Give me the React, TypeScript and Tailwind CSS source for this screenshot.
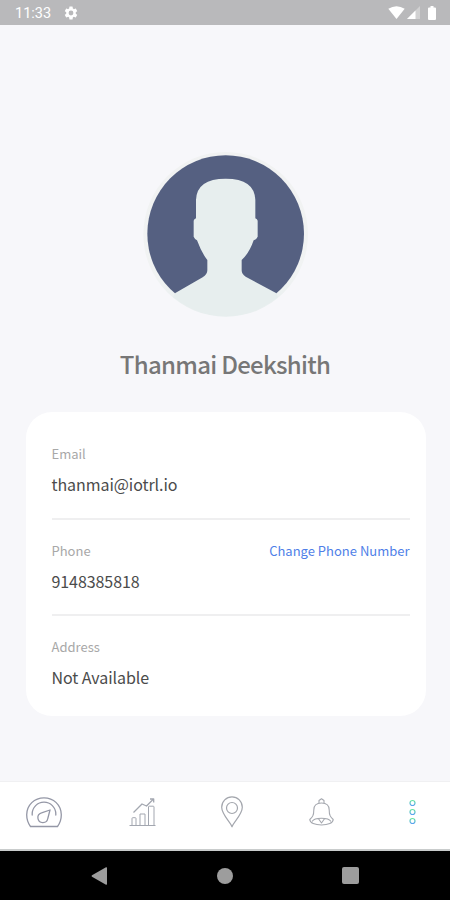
import React from "react";

const fields = [
  { label: "Email", value: "thanmai@iotrl.io" },
  { label: "Phone", value: "9148385818", action: "Change Phone Number" },
  { label: "Address", value: "Not Available" },
];

function StatusBar() {
  return (
    <header className="flex h-[25px] items-center bg-[#b9b9bb] pl-[15px] pr-[14px] text-white">
      <span className="pt-[3px] font-[Roboto,sans-serif] text-[14.5px] leading-none font-normal">
        11:33
      </span>
      <svg className="ml-3 size-4" viewBox="0 0 24 24" fill="currentColor">
        <path d="M19.14 12.94c.04-.3.06-.61.06-.94s-.02-.64-.07-.94l2.03-1.58a.5.5 0 0 0 .12-.61l-1.92-3.32a.49.49 0 0 0-.59-.22l-2.39.96a7 7 0 0 0-1.62-.94l-.36-2.54a.48.48 0 0 0-.48-.41h-3.84a.47.47 0 0 0-.47.41l-.36 2.54c-.59.24-1.13.57-1.62.94l-2.39-.96a.48.48 0 0 0-.59.22L2.74 8.87a.48.48 0 0 0 .12.61l2.03 1.58a6 6 0 0 0-.02 1.88l-2.03 1.58a.5.5 0 0 0-.12.61l1.92 3.32c.12.22.37.29.59.22l2.39-.96c.5.38 1.03.7 1.62.94l.36 2.54c.05.24.24.41.48.41h3.84c.24 0 .44-.17.47-.41l.36-2.54a6.8 6.8 0 0 0 1.62-.94l2.39.96c.22.08.47 0 .59-.22l1.92-3.32a.47.47 0 0 0-.12-.61zM12 15.6a3.6 3.6 0 1 1 0-7.2 3.6 3.6 0 0 1 0 7.2z" />
      </svg>
      <svg className="ml-auto h-[13px] w-[17px]" viewBox="0 0 17 13" fill="currentColor">
        <path d="M.3 2.8Q8.500-2.500 16.700 2.800L8.500 13z" />
      </svg>
      <svg className="ml-[2px] h-[13px] w-[13px]" viewBox="0 0 13 13" fill="currentColor">
        <path d="M0 13 13 0v13z" opacity=".35" />
        <path d="M0 13 8.500 4.500V13z" />
      </svg>
      <svg className="ml-[8px] h-[14px] w-[8px]" viewBox="0 0 8 14" fill="currentColor">
        <path d="M2.500 0h3v1.500H7a1 1 0 0 1 1 1V13a1 1 0 0 1-1 1H1a1 1 0 0 1-1-1V2.500a1 1 0 0 1 1-1h1.500z" />
      </svg>
    </header>
  );
}

function Avatar() {
  return (
    <svg className="size-[190px]" viewBox="0 0 570 570">
      <defs>
        <linearGradient id="ring" x1="0" y1="0" x2="0" y2="1">
          <stop offset="0" stopColor="#f1f2f2" />
          <stop offset=".75" stopColor="#f1f3f3" />
          <stop offset="1" stopColor="#e7eeee" />
        </linearGradient>
        <clipPath id="face">
          <circle cx="287" cy="281" r="247" />
        </clipPath>
      </defs>
      <circle cx="287" cy="283" r="247" fill="url(#ring)" />
      <circle cx="287" cy="281" r="235" fill="#556081" />
      <path
        clipPath="url(#face)"
        d="M136 459 218 412Q232 403 232 391V360Q215 339 201 301Q195 299 191 290V242Q192 237 198 235V180Q200 116 287 116Q374 116 376 180V235Q382 237 383 242V290Q379 299 371 301Q358 339 335 360V391Q335 403 347 410L438 459 480 540H90z"
        fill="#e7eeee"
      />
    </svg>
  );
}

function GaugeIcon() {
  return (
    <svg className="h-8 w-9" viewBox="0 0 36 32" fill="none" stroke="#9497a6" strokeWidth="1.3" strokeLinejoin="round" strokeLinecap="round">
      <path d="M4.500 30.500H31.500Q35.300 25.500 35.300 18.800C35.300 9 27.500 1.800 18 1.800S.7 9 .7 18.800Q.7 25.500 4.500 30.500z" />
      <path d="M6.200 19V18A11.800 11.800 0 0 1 29.800 18V19" />
      <path d="M24 14 15.500 16.800A5 5 0 1 0 21.800 22.500z" />
    </svg>
  );
}

function ChartIcon() {
  return (
    <svg className="ml-[67px] h-[29px] w-[27px]" viewBox="0 0 27 29" fill="none" stroke="#a3a7b0" strokeWidth="1" strokeLinejoin="round">
      <path d="M.5 27.500H26.500M3 27.500V20.500Q3 19.700 3.800 19.700H6.200Q7 19.700 7 20.500V27.500M11 27.500V16H16V27.500M19.500 27.500V9Q19.500 8.200 20.300 8.200H24.200Q25 8.200 25 9V27.500" />
      <path d="M4.500 14.500 13 6 17.500 8 24 1.500M21 1H24.700V4.500" strokeWidth="1.300" />
    </svg>
  );
}

function PinIcon() {
  return (
    <svg className="ml-[65px] h-8 w-[22px]" viewBox="0 0 22 32" fill="none" stroke="#a3a6ad" strokeWidth="1.2" strokeLinejoin="round">
      <path d="M11 30.800C9.500 26 .7 18.500.7 11.200A10.300 10.300 0 0 1 21.300 11.200C21.300 18.500 12.500 26 11 30.800z" />
      <circle cx="11" cy="12" r="5.500" />
    </svg>
  );
}

function BellIcon() {
  return (
    <svg className="ml-[66px] h-[28px] w-[25px]" viewBox="0 0 25 28" fill="none" stroke="#a5a8af" strokeWidth="1.1" strokeLinejoin="round">
      <path d="M10 5V2.500L12.500.7 15 2.500V5" />
      <path d="M.8 21.500C3.500 19 4.800 17.500 4.800 12C4.800 7.500 8 5 12.500 5S20.200 7.500 20.200 12C20.200 17.500 21.500 19 24.200 21.500C24.200 25 19 27 12.500 27S.8 25 .8 21.500z" />
      <path d="M3 23.500Q5 20.300 12.500 20.300T22 23.500M9.500 20.800 12.500 25 15.500 20.800" />
    </svg>
  );
}

function MoreIcon() {
  return (
    <svg className="ml-[75px] h-[26px] w-[7px]" viewBox="0 0 7 26" fill="none" strokeWidth="1.2">
      <defs>
        <linearGradient id="dot" x1="0" y1="0" x2="0" y2="1">
          <stop offset="0" stopColor="#65e3a2" />
          <stop offset="1" stopColor="#5ba4ef" />
        </linearGradient>
      </defs>
      {[4, 13, 22].map((cy) => (
        <circle key={cy} cx="3.5" cy={cy} r="2.500" stroke="url(#dot)" />
      ))}
    </svg>
  );
}

export default function App() {
  return (
    <div className="flex h-[900px] w-[450px] flex-col overflow-hidden bg-[#f7f7fa] font-['Noto_Sans_CJK_SC',sans-serif]">
      <StatusBar />

      <main className="flex flex-1 flex-col items-center pt-[115px]">
        <Avatar />
        <h1 className="mt-[14px] h-10 text-[24px] leading-10 font-medium tracking-[-0.72px] whitespace-nowrap text-[#777777]">
          Thanmai Deekshith
        </h1>
        <section className="mt-[28px] ml-[1px] h-[304px] w-[400px] rounded-[26px] bg-white pt-[11px] pr-4 pl-[26px]">
          {fields.map((field) => (
            <div
              key={field.label}
              className="h-24 border-b-2 border-[#efeff0] pt-[21px] first:h-[97px] last:border-b-0"
            >
              <div className="flex h-5 items-center justify-between text-[13px] whitespace-nowrap">
                <span className="text-[#a8a8a8]">{field.label}</span>
                {field.action && (
                  <button className="text-[#4f7fe8]">{field.action}</button>
                )}
              </div>
              <p className="mt-2 text-[16px] leading-6 tracking-[-0.07px] whitespace-nowrap text-[#4b4b4b]">
                {field.value}
              </p>
            </div>
          ))}
        </section>
      </main>

      <nav className="flex h-[70px] items-center border-t border-b-2 border-[#f0f0f2] border-b-[#c9cccc] bg-white pb-[7px] pl-[26px]">
        <GaugeIcon />
        <ChartIcon />
        <PinIcon />
        <BellIcon />
        <MoreIcon />
      </nav>

      <footer className="flex h-[49px] items-center justify-between bg-black px-[91px] text-[#9d9d9d]">
        <svg className="h-[18px] w-4" viewBox="0 0 16 18" fill="currentColor">
          <path d="M1 8.300 15 .3Q16 0 16 1V17Q16 18 15 17.700L1 9.700Q0 9 1 8.300z" />
        </svg>
        <div className="size-4 rounded-full bg-current" />
        <div className="size-[17px] rounded-[2px] bg-current" />
      </footer>
    </div>
  );
}
